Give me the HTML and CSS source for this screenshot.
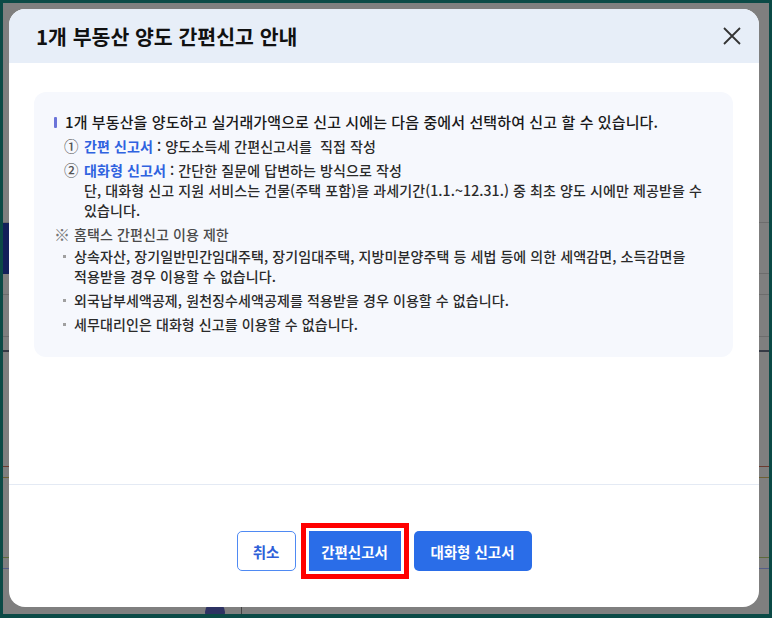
FILE: index.html
```html
<!DOCTYPE html>
<html lang="ko">
<head>
   <meta charset="UTF-8">
   <meta name="viewport" content="width=device-width, initial-scale=1.0">
   <title>1개 부동산 양도 간편신고 안내</title>
   <link rel="stylesheet" href="styles.css">
</head>
<body>
    <div class="screen">
        <!-- page behind the dimmed overlay -->
        <div class="page">
            <div class="pg_row pg_nav"><div class="pg_nav_left"></div></div>
            <div class="pg_row pg_thin"></div>
            <div class="pg_row pg_dark"></div>
            <div class="pg_row pg_red"></div>
            <div class="pg_row pg_olive"></div>
            <div class="pg_row pg_olive2"></div>
            <div class="pg_row pg_blue"></div>
            <div class="pg_foot">
                <span class="pg_dot"></span>
                <span class="pg_bar"></span>
            </div>
        </div>

        <div class="modal">
            <div class="modal_head">
                <h1 class="modal_title">1개 부동산 양도 간편신고 안내</h1>
                <button class="modal_close" aria-label="닫기">
                    <svg width="18" height="18" viewBox="0 0 18 18">
                        <path d="M1 1L17 17M17 1L1 17" stroke="#333" stroke-width="1.8" fill="none"/>
                    </svg>
                </button>
            </div>
            <div class="modal_body">
                <div class="info">
                    <div class="info_lead">
                        <span class="mark"></span>
                        <span>1개 부동산을 양도하고 실거래가액으로 신고 시에는 다음 중에서 선택하여 신고 할 수 있습니다.</span>
                    </div>
                    <div class="opt">
                        <span class="opt_num">①</span>
                        <div><b class="opt_name">간편 신고서</b> : 양도소득세 간편신고서를&nbsp; 직접 작성</div>
                    </div>
                    <div class="opt">
                        <span class="opt_num">②</span>
                        <div><b class="opt_name">대화형 신고서</b> : 간단한 질문에 답변하는 방식으로 작성<br>단, 대화형 신고 지원 서비스는 건물(주택 포함)을 과세기간(1.1.~12.31.) 중 최초 양도 시에만 제공받을 수 있습니다.</div>
                    </div>
                    <div class="note">
                        <span class="note_mark">※</span>
                        <span>홈택스 간편신고 이용 제한</span>
                    </div>
                    <ul class="limits">
                        <li>상속자산, 장기일반민간임대주택, 장기임대주택, 지방미분양주택 등 세법 등에 의한 세액감면, 소득감면을 적용받을 경우 이용할 수 없습니다.</li>
                        <li>외국납부세액공제, 원천징수세액공제를 적용받을 경우 이용할 수 없습니다.</li>
                        <li>세무대리인은 대화형 신고를 이용할 수 없습니다.</li>
                    </ul>
                </div>
            </div>
            <div class="modal_foot">
                <button class="btn btn_line">취소</button>
                <button class="btn btn_blue btn_pick">간편신고서</button>
                <button class="btn btn_blue">대화형 신고서</button>
            </div>
        </div>
    </div>
</body>
</html>
```

FILE: styles.css
```css
* { box-sizing: border-box; }
html, body { margin: 0; padding: 0; }
body {
    font-family: "Noto Sans CJK KR", "Noto Sans", sans-serif;
    color: #222;
}
.screen {
    position: relative;
    width: 772px;
    height: 618px;
    border: 3px solid #0b4a46;
    border-bottom-width: 4px;
    background: #7f7f7f;
    overflow: hidden;
}

/* background page, seen through the overlay */
.page { padding-top: 219px; }
.pg_row { border-top: 1px solid #6c6c6c; }
.pg_nav { height: 52px; border-bottom: 1px solid #6c6c6c; }
.pg_nav_left { width: 6px; height: 51px; background: #13205a; }
.pg_thin { margin-top: 20px; height: 43px; border-bottom: 1px solid #6c6c6c; }
.pg_dark { margin-top: 13px; border-top: 2px solid #353a45; height: 116px; }
.pg_red { border-top-color: #6b3a2e; height: 11px; }
.pg_olive { border-top-color: #6d6032; height: 80px; }
.pg_olive2 { border-top-color: #5d6a3a; height: 11px; }
.pg_blue { border-top-color: #555d88; height: 34px; }
.pg_foot {
    display: flex;
    align-items: flex-start;
    padding-left: 202px;
}
.pg_dot {
    width: 20px;
    height: 20px;
    border-radius: 50%;
    background: #2d3262;
}
.pg_bar {
    width: 1px;
    height: 14px;
    margin-left: 16px;
    background: #444;
}

/* modal */
.modal {
    position: absolute;
    top: 6px;
    left: 6px;
    width: 750px;
    height: 598px;
    background: #fff;
    border-radius: 16px;
    overflow: hidden;
    display: flex;
    flex-direction: column;
}
.modal_head {
    height: 54px;
    flex: none;
    background: #e7eef8;
    display: flex;
    align-items: center;
    justify-content: space-between;
    padding: 0 18px 0 27px;
}
.modal_title {
    margin: 0;
    font-size: 20.5px;
    font-weight: 700;
    color: #111;
}
.modal_close {
    border: 0;
    background: none;
    padding: 0;
    width: 18px;
    height: 18px;
    cursor: pointer;
}
.modal_close svg { display: block; }

.modal_body {
    flex: 1;
    padding: 29px 26px 0 25px;
}
.info {
    background: #f6f8fd;
    border-radius: 12px;
    padding: 20px 20px 23px 20px;
    font-size: 14px;
    font-weight: 500;
    line-height: 20px;
    letter-spacing: 0.1px;
    word-break: keep-all;
}
.info_lead {
    display: flex;
    align-items: center;
    font-size: 15px;
    color: #1a1a1a;
}
.mark {
    width: 3px;
    height: 11px;
    margin-right: 8px;
    background: #6b74d9;
    border-radius: 1px;
    flex: none;
}
.opt {
    display: flex;
    margin: 4px 0 0 10px;
    color: #2a2a2a;
}
.opt_num {
    width: 20px;
    flex: none;
    color: #555;
    font-size: 14.5px;
}
.opt_name {
    color: #2f62e0;
    font-weight: 700;
}
.note {
    display: flex;
    margin-top: 4px;
    color: #4a4a4a;
}
.note_mark {
    width: 20px;
    flex: none;
    font-size: 16px;
    color: #777;
}
.limits {
    list-style: none;
    margin: 2px 0 0;
    padding: 0;
    color: #2a2a2a;
}
.limits li {
    display: flex;
    margin-top: 4px;
}
.limits li:first-child { margin-top: 0; }
.limits li::before {
    content: "";
    flex: none;
    width: 3px;
    height: 3px;
    margin: 9px 8px 0 9px;
    background: #a0a0a0;
}

.modal_foot {
    height: 123px;
    flex: none;
    border-top: 1px solid #e4eaf4;
    display: flex;
    justify-content: center;
    align-items: flex-start;
    gap: 13px;
    padding: 46px 0 0;
}
.btn {
    height: 40px;
    padding: 0 15px;
    font-family: inherit;
    font-size: 14.5px;
    font-weight: 700;
    border-radius: 5px;
    cursor: pointer;
}
.btn_line {
    width: 59px;
    border: 1px solid #4f8af3;
    background: #fff;
    color: #2f5fd8;
}
.btn_blue {
    border: 0;
    background: #2a6de8;
    color: #fff;
}
.btn_pick {
    width: 92px;
    padding: 0 10px;
    border-radius: 0;
    outline: 5px solid #f00;
    outline-offset: 3px;
}
.btn_blue:last-child { width: 118px; }
```
